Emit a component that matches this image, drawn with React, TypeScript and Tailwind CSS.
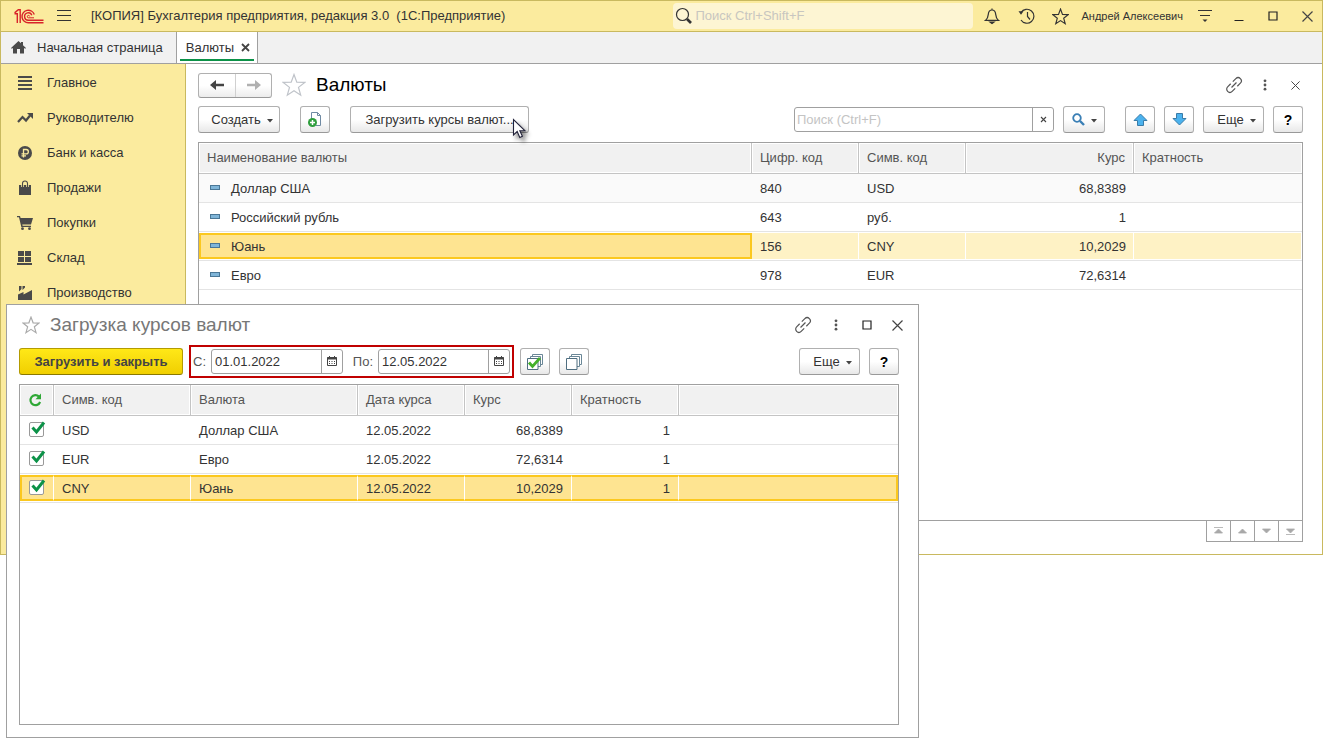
import type { ReactNode } from "react";
import clsx from "clsx";

const sections = [
  { label: "Главное", icon: <MainIcon /> },
  { label: "Руководителю", icon: <TrendIcon /> },
  { label: "Банк и касса", icon: <RubleIcon /> },
  { label: "Продажи", icon: <BagIcon /> },
  { label: "Покупки", icon: <CartIcon /> },
  { label: "Склад", icon: <WarehouseIcon /> },
  { label: "Производство", icon: <FactoryIcon /> },
];

const currencies = [
  { name: "Доллар США", num: "840", code: "USD", rate: "68,8389" },
  { name: "Российский рубль", num: "643", code: "руб.", rate: "1" },
  { name: "Юань", num: "156", code: "CNY", rate: "10,2029" },
  { name: "Евро", num: "978", code: "EUR", rate: "72,6314" },
];

const rates = [
  { code: "USD", name: "Доллар США", date: "12.05.2022", rate: "68,8389", ratio: "1" },
  { code: "EUR", name: "Евро", date: "12.05.2022", rate: "72,6314", ratio: "1" },
  { code: "CNY", name: "Юань", date: "12.05.2022", rate: "10,2029", ratio: "1" },
];

export default function App() {
  return (
    <div className="relative min-h-[740px] bg-white font-['Liberation_Sans',Arial,sans-serif] text-[13px] leading-4 text-[#333]">
      <div className="flex min-h-[555px] flex-col border border-[#c9b95f] bg-white">
        <TitleBar />
        <Tabs />
        <div className="flex flex-1">
          <Sidebar />
          <CurrencyList />
        </div>
      </div>
      <RatesDialog />
    </div>
  );
}

function TitleBar() {
  return (
    <header className="flex h-[31px] items-center border-b border-[#c9b95f] bg-[#fbeb9e] pl-[13px] pr-[9px]">
      <Logo />
      <IconButton label="Меню" className="ml-3">
        <svg width="16" height="14" viewBox="0 0 16 14" stroke="#333" strokeWidth="1">
          <path d="M1 1.500h14M1 6.500h14M1 11.500h14" />
        </svg>
      </IconButton>
      <span className="ml-[19px] whitespace-pre">[КОПИЯ] Бухгалтерия предприятия, редакция 3.0  (1С:Предприятие)</span>
      <label className="ml-auto flex h-[26px] w-[300px] items-center rounded-sm bg-[#fdf5d3] pl-[2px]">
        <svg width="18" height="18" viewBox="0 0 18 18" fill="none" stroke="#333">
          <circle cx="7.500" cy="7.500" r="6" strokeWidth="1.200" />
          <path d="m12 12 4 4" strokeWidth="2.600" />
        </svg>
        <input
          aria-label="Поиск"
          placeholder="Поиск Ctrl+Shift+F"
          className="ml-[2px] min-w-0 flex-1 bg-transparent outline-none placeholder:text-[#c8c6c0]"
        />
      </label>
      <div className="ml-[11px] flex items-center">
        <IconButton label="Уведомления">
          <svg width="16" height="18" viewBox="0 0 16 18" fill="none" stroke="#333" strokeWidth="1.200">
            <path d="M1.500 13.400h13c-2-1.600-2.600-3.400-2.800-6C11.500 4.600 10.300 3 8 3S4.500 4.600 4.300 7.400c-.2 2.600-.8 4.400-2.800 6zM8 1.400V3" />
            <path d="M6 15h4l-2 1.500z" fill="#333" />
          </svg>
        </IconButton>
        <IconButton label="История" className="ml-[18px]">
          <svg width="18" height="18" viewBox="0 0 18 18" fill="none" stroke="#333" strokeWidth="1.200">
            <path d="M3 5.500A7 7 0 1 1 3 13M9.500 5v4.500l2.500 3" />
            <path d="M.5 4.300h5L3 7.800z" fill="#333" stroke="none" />
          </svg>
        </IconButton>
        <IconButton label="Избранное" className="ml-4">
          <StarIcon size={17} color="#333" />
        </IconButton>
        <a href="#user" className="ml-3 text-[11px]">Андрей Алексеевич</a>
        <IconButton label="Настройки" className="ml-[14px]">
          <svg width="16" height="14" viewBox="0 0 16 14" stroke="#333">
            <path d="M1 1.500h14M3 6.500h10" />
            <path d="M5.500 10.500h5L8 13z" fill="#333" stroke="none" />
          </svg>
        </IconButton>
        <IconButton label="Свернуть" className="ml-[21px]">
          <svg width="10" height="12" viewBox="0 0 10 12" stroke="#222">
            <path d="M.5 10.500h9" />
          </svg>
        </IconButton>
        <IconButton label="Развернуть" className="ml-6">
          <SquareIcon />
        </IconButton>
        <IconButton label="Закрыть" className="ml-6">
          <CrossIcon size={11} />
        </IconButton>
      </div>
    </header>
  );
}

function Tabs() {
  return (
    <nav className="flex h-8 border-b border-[#a0a0a0] bg-[#f1f1f1]">
      <a href="#home" className="flex items-center border-r border-[#a0a0a0] pl-[10px] pr-[13px]">
        <svg width="15" height="13" viewBox="0 0 15 13" fill="#4a4a4a">
          <path d="M7.500 0 0 7l.8.8L2 7v5.500h4V8h3v4.500h4V7l1.200.8.800-.8-3-2.800V1h-2v1.300z" />
        </svg>
        <span className="ml-[11px]">Начальная страница</span>
      </a>
      <div className="flex w-[81px] flex-col border-r border-[#a0a0a0] bg-white px-[3px] pb-[2px]">
        <div className="flex flex-1 items-center justify-between border-b-2 border-[#0c9248] pl-[6px] pr-1 pt-1">
          <a href="#currencies">Валюты</a>
          <IconButton label="Закрыть вкладку">
            <svg width="9" height="9" viewBox="0 0 9 9" stroke="#444" strokeWidth="1.800">
              <path d="m1 1 7 7M8 1 1 8" />
            </svg>
          </IconButton>
        </div>
      </div>
    </nav>
  );
}

function Sidebar() {
  return (
    <aside className="w-[185px] shrink-0 border-r border-[#c9b95f] bg-[#fbeb9e] pt-px">
      {sections.map((s) => (
        <a key={s.label} href="#section" className="flex h-[35px] items-center pl-4">
          {s.icon}
          <span className="ml-[14px]">{s.label}</span>
        </a>
      ))}
    </aside>
  );
}

function CurrencyList() {
  return (
    <main className="flex min-w-0 flex-1 flex-col pb-3 pl-3 pr-[19px] pt-2">
      <div className="flex h-[26px] items-center">
        <div className="flex h-[25px] rounded-[3px] border border-[#b0b0b0] border-b-[#999] bg-gradient-to-b from-white from-50% to-[#ececec]">
          <button aria-label="Назад" className="flex w-[37px] items-center justify-center border-r border-[#d0d0d0]">
            <ArrowIcon color="#444" />
          </button>
          <button aria-label="Вперед" className="flex w-[35px] items-center justify-center">
            <ArrowIcon color="#b0b0b0" flip />
          </button>
        </div>
        <IconButton label="В избранное" className="ml-[10px]">
          <StarIcon size={24} color="#bfc3c9" />
        </IconButton>
        <h1 className="ml-[10px] text-[19px] leading-6 text-black">Валюты</h1>
        <div className="ml-auto flex items-center pr-[3px]">
          <IconButton label="Ссылка"><LinkIcon /></IconButton>
          <IconButton label="Действия" className="ml-5"><DotsIcon /></IconButton>
          <IconButton label="Закрыть" className="ml-6"><CrossIcon size={9} /></IconButton>
        </div>
      </div>

      <div className="mt-2 flex items-center">
        <Button className="w-[82px] pl-[6px]">Создать <Caret /></Button>
        <Button label="Создать из файла" className="ml-5 w-[30px]">
          <svg width="16" height="17" viewBox="0 0 16 17" fill="none">
            <path d="M4.500 8V1.500h6l3 3v10H9" fill="#fff" stroke="#6f8aa3" />
            <path d="M10.500 1.500v3h3" stroke="#6f8aa3" />
            <circle cx="5.500" cy="11.500" r="4.500" fill="#2f9e3d" />
            <path d="M5.500 9v5M3 11.500h5" stroke="#fff" strokeWidth="1.500" />
          </svg>
        </Button>
        <div className="relative ml-5">
          <Button className="w-[179px]">Загрузить курсы валют...</Button>
          <svg className="absolute left-[162px] top-[12px] drop-shadow-[3px_4px_2px_rgba(0,0,0,0.45)]" width="14" height="21" viewBox="0 0 14 21">
            <path d="M1.500 1.500v15.500l3.700-3.500 2.600 6 2.600-1.200-2.600-5.600h5z" fill="#fff" stroke="#22223a" strokeWidth="1.100" />
          </svg>
        </div>
        <div className="ml-auto flex h-[25px] w-[260px] rounded-[3px] border border-[#a0a0a0] bg-white">
          <input aria-label="Поиск в списке" placeholder="Поиск (Ctrl+F)" className="min-w-0 flex-1 pl-[2px] outline-none placeholder:text-[#c4c4c4]" />
          <button aria-label="Очистить" className="flex w-[21px] items-center justify-center border-l border-[#a0a0a0]">
            <svg width="7" height="7" viewBox="0 0 7 7" stroke="#444" strokeWidth="1.100"><path d="m1 1 5 5M6 1 1 6" /></svg>
          </button>
        </div>
        <Button label="Найти" className="ml-[9px] w-[42px]">
          <svg width="13" height="13" viewBox="0 0 13 13" fill="none" stroke="#3a7fb5">
            <circle cx="5" cy="5" r="3.800" strokeWidth="1.800" />
            <path d="m8 8 4 4" strokeWidth="2.400" />
          </svg>
          <Caret />
        </Button>
        <Button label="Вверх" className="ml-5 w-[30px]"><BlueArrow /></Button>
        <Button label="Вниз" className="ml-[9px] w-[30px]"><BlueArrow down /></Button>
        <Button className="ml-[9px] w-[61px] pl-[6px]">Еще <Caret /></Button>
        <Button className="ml-[9px] w-[30px] text-black"><span className="text-sm font-bold">?</span></Button>
      </div>

      <div className="mt-[9px] min-h-0 flex-1 border border-[#a0a0a0]">
        <table className="w-full table-fixed border-separate border-spacing-0">
          <colgroup>
            <col />
            <col className="w-[107px]" />
            <col className="w-[107px]" />
            <col className="w-[168px]" />
            <col className="w-[168px]" />
          </colgroup>
          <thead>
            <tr>
              <HeadCell>Наименование валюты</HeadCell>
              <HeadCell>Цифр. код</HeadCell>
              <HeadCell>Симв. код</HeadCell>
              <HeadCell right>Курс</HeadCell>
              <HeadCell last>Кратность</HeadCell>
            </tr>
          </thead>
          <tbody>
            {currencies.map((c, i) => {
              const active = c.code === "CNY";
              const cell = clsx(
                "mr-px flex h-[26px] items-center pl-2 pr-[7px] pt-[2px]",
                active && "bg-[#fef2c5]",
              );
              return (
                <tr key={c.code} className={clsx(i === 0 && "bg-[#fafafa]")}>
                  <td className="border-b border-[#e4e4e4] px-0 py-px">
                    <div
                      className={clsx(
                        "flex h-[26px] items-center border-2 pt-[2px]",
                        active ? "border-[#fbc81f] bg-[#fee491]" : "border-transparent",
                      )}
                    >
                      <span className="mb-[3px] ml-[9px] h-[5px] w-[10px] border border-[#4a7796] bg-[#7fb5d8]" />
                      <span className="ml-[11px]">{c.name}</span>
                    </div>
                  </td>
                  <td className="border-b border-[#e4e4e4] px-0 py-px"><div className={cell}>{c.num}</div></td>
                  <td className="border-b border-[#e4e4e4] px-0 py-px"><div className={cell}>{c.code}</div></td>
                  <td className="border-b border-[#e4e4e4] px-0 py-px"><div className={clsx(cell, "justify-end")}>{c.rate}</div></td>
                  <td className="border-b border-[#e4e4e4] px-0 py-px"><div className={cell} /></td>
                </tr>
              );
            })}
          </tbody>
        </table>
      </div>
      <div className="-mt-px flex h-[22px] self-end border border-[#a0a0a0] bg-white">
        <PagerButton label="В начало" d="M2 1.500h9M6.500 3 10.500 7H2.500z" />
        <PagerButton label="Предыдущая" d="M6.500 3 10.500 7h-8z" />
        <PagerButton label="Следующая" d="M2.500 3h8L6.500 7z" />
        <PagerButton label="В конец" d="M2 8.500h9M2.500 3h8L6.500 7z" last />
      </div>
    </main>
  );
}

function RatesDialog() {
  return (
    <section
      role="dialog"
      aria-label="Загрузка курсов валют"
      className="absolute left-[6px] right-[404px] top-[304px] flex min-h-[434px] flex-col border border-[#a0a0a0] bg-white px-3 pb-3"
    >
      <div className="flex h-10 items-center pr-[3px]">
        <IconButton label="В избранное" className="ml-[3px]">
          <StarIcon size={18} color="#aaa" />
        </IconButton>
        <h2 className="ml-[10px] text-[19px] leading-6 text-[#777]">Загрузка курсов валют</h2>
        <div className="ml-auto flex items-center">
          <IconButton label="Ссылка"><LinkIcon /></IconButton>
          <IconButton label="Действия" className="ml-[22px]"><DotsIcon /></IconButton>
          <IconButton label="Развернуть" className="ml-6"><SquareIcon /></IconButton>
          <IconButton label="Закрыть" className="ml-5"><CrossIcon size={11} /></IconButton>
        </div>
      </div>

      <div className="flex items-center pr-[7px]">
        <button className="h-[27px] w-[164px] rounded-[3px] border border-[#b39b00] border-b-[#8a7800] bg-gradient-to-b from-[#ffe817] to-[#f0cf00] font-bold text-[#444]">
          Загрузить и закрыть
        </button>
        <div className="ml-[6px] flex h-[33px] w-[325px] items-center justify-between border-2 border-[#c00000] px-[2px] text-[#555]">
          <DateField id="from" label="С:" value="01.01.2022" />
          <DateField id="to" label="По:" value="12.05.2022" />
        </div>
        <Button label="Установить флажки" className="ml-[6px] w-[30px]"><StackIcon checked /></Button>
        <Button label="Снять флажки" className="ml-[9px] w-[30px]"><StackIcon /></Button>
        <Button className="ml-auto w-[61px] pl-[6px]">Еще <Caret /></Button>
        <Button className="ml-[9px] w-[30px] text-black"><span className="text-sm font-bold">?</span></Button>
      </div>

      <div className="mr-[7px] mt-[6px] flex-1 border border-[#a0a0a0]">
        <table className="w-full table-fixed border-separate border-spacing-0">
          <colgroup>
            <col className="w-[34px]" />
            <col className="w-[137px]" />
            <col className="w-[167px]" />
            <col className="w-[107px]" />
            <col className="w-[107px]" />
            <col className="w-[107px]" />
            <col />
          </colgroup>
          <thead>
            <tr>
              <HeadCell>
                <svg width="15" height="14" viewBox="0 0 15 14" fill="none">
                  <path d="M11 3.600A5 5 0 1 0 12.100 9" stroke="#2fa836" strokeWidth="2.200" />
                  <path d="M13 .5v5.700H7.500z" fill="#2fa836" />
                </svg>
              </HeadCell>
              <HeadCell>Симв. код</HeadCell>
              <HeadCell>Валюта</HeadCell>
              <HeadCell>Дата курса</HeadCell>
              <HeadCell>Курс</HeadCell>
              <HeadCell>Кратность</HeadCell>
              <HeadCell last />
            </tr>
          </thead>
          <tbody>
            {rates.map((r) => {
              const active = r.code === "CNY";
              return (
                <tr key={r.code}>
                  <RateCell active={active} first><Check label={r.code} /></RateCell>
                  <RateCell active={active}>{r.code}</RateCell>
                  <RateCell active={active}>{r.name}</RateCell>
                  <RateCell active={active}>{r.date}</RateCell>
                  <RateCell active={active} right>{r.rate}</RateCell>
                  <RateCell active={active} right>{r.ratio}</RateCell>
                  <RateCell active={active} last />
                </tr>
              );
            })}
          </tbody>
        </table>
      </div>
    </section>
  );
}

function HeadCell({ children, right, last }: { children?: ReactNode; right?: boolean; last?: boolean }) {
  return (
    <th className={clsx("border-b border-[#c4c4c4] p-px font-normal text-[#555]", !last && "border-r")}>
      <div className={clsx("flex h-7 items-center bg-[#f1f1f1] px-[7px]", right && "justify-end")}>{children}</div>
    </th>
  );
}

type RateCellProps = { children?: ReactNode; active: boolean; first?: boolean; last?: boolean; right?: boolean };

function RateCell({ children, active, first, last, right }: RateCellProps) {
  return (
    <td className="border-b border-[#e4e4e4] px-0 py-px">
      <div
        className={clsx(
          "flex h-[26px] items-center border-y-2",
          active ? "border-y-[#fbc81f] bg-[#fee491]" : "border-y-transparent",
          first ? "border-l-2 pb-[2px] pl-[7px]" : "pl-2 pt-[2px]",
          first && (active ? "border-l-[#fbc81f]" : "border-l-transparent"),
          last ? "border-r-2" : "border-r",
          active ? (last ? "border-r-[#fbc81f]" : "border-r-white") : "border-r-transparent",
          right && "justify-end pr-2",
        )}
      >
        {children}
      </div>
    </td>
  );
}

function Check({ label }: { label: string }) {
  return (
    <label className="grid items-center">
      <input
        type="checkbox"
        defaultChecked
        aria-label={label}
        className="peer col-start-1 row-start-1 size-[15px] appearance-none rounded-[2px] border border-[#999] bg-white"
      />
      <svg className="pointer-events-none invisible col-start-1 row-start-1 mb-[3px] peer-checked:visible" width="17" height="14" viewBox="0 0 17 14" fill="none">
        <path d="m3.500 6.500 4 4.500L15 1.500" stroke="#0c9248" strokeWidth="3" />
      </svg>
    </label>
  );
}

function DateField({ id, label, value }: { id: string; label: string; value: string }) {
  return (
    <div className="flex items-center gap-[5px]">
      <label htmlFor={id}>{label}</label>
      <div className="flex h-[25px] w-[132px] rounded-[3px] border border-[#a0a0a0] bg-white">
        <input id={id} defaultValue={value} className="min-w-0 flex-1 pl-[3px] text-[#333] outline-none" />
        <button aria-label="Выбрать дату" className="flex w-[21px] items-center justify-center border-l border-[#a0a0a0] pb-[2px]">
          <svg width="10" height="10" viewBox="0 0 10 10" fill="none" stroke="#444">
            <path d="M.5 1.500h9v8h-9z" />
            <path d="M0 2.500h10" strokeWidth="2" />
            <path d="M2.500 0v2M7.500 0v2M2 5.500h1M4.500 5.500h1M7 5.500h1M2 7.500h1M4.500 7.500h1M7 7.500h1" />
          </svg>
        </button>
      </div>
    </div>
  );
}

function Button({ children, label, className }: { children: ReactNode; label?: string; className?: string }) {
  return (
    <button
      aria-label={label}
      className={clsx(
        "flex h-[27px] items-center justify-center gap-[6px] whitespace-nowrap rounded-[3px] border border-[#b0b0b0] border-b-[#999] bg-gradient-to-b from-white from-50% to-[#e8e8e8]",
        className,
      )}
    >
      {children}
    </button>
  );
}

function IconButton({ children, label, className }: { children: ReactNode; label: string; className?: string }) {
  return (
    <button aria-label={label} className={clsx("flex shrink-0 items-center justify-center", className)}>
      {children}
    </button>
  );
}

function PagerButton({ label, d, last }: { label: string; d: string; last?: boolean }) {
  return (
    <button
      aria-label={label}
      className={clsx("flex items-center justify-center border-[#a0a0a0]", last ? "w-[23px]" : "w-6 border-r")}
    >
      <svg width="13" height="10" viewBox="0 0 13 10" fill="#a8a8a8">
        <path d={d} stroke="#a8a8a8" strokeWidth="0.800" />
      </svg>
    </button>
  );
}

function Caret() {
  return (
    <svg width="6" height="6" viewBox="0 0 6 6" fill="#444">
      <path d="M0 2h6L3 5.500z" />
    </svg>
  );
}

function ArrowIcon({ color, flip }: { color: string; flip?: boolean }) {
  return (
    <svg width="14" height="10" viewBox="0 0 14 10" fill={color}>
      <path d={flip ? "M14 5 8 0v3.700H0v2.600h8V10z" : "M0 5l6-5v3.700h8v2.600H6V10z"} />
    </svg>
  );
}

function BlueArrow({ down }: { down?: boolean }) {
  return (
    <svg width="15" height="13" viewBox="0 0 15 13" fill="#4bb2ee" stroke="#3a7ca8">
      <path d={down ? "M4.500.5h6v5h3.500l-6.500 6.500L1 5.500h3.500z" : "M7.500 1 14 7.500h-3.500v5h-6v-5H1z"} />
    </svg>
  );
}

function StarIcon({ size, color }: { size: number; color: string }) {
  return (
    <svg width={size} height={size} viewBox="0 0 24 24" fill="none" stroke={color} strokeWidth={size > 20 ? 1.2 : 1.6}>
      <path d="m12 1.500 2.800 7.600 8 .3-6.300 5 2.200 7.800L12 17.800l-6.700 4.400 2.200-7.800-6.300-5 8-.3z" />
    </svg>
  );
}

function SquareIcon() {
  return (
    <svg width="10" height="10" viewBox="0 0 10 10" fill="none" stroke="#222" strokeWidth="1.200">
      <path d="M1 1h8v8H1z" />
    </svg>
  );
}

function CrossIcon({ size }: { size: number }) {
  return (
    <svg width={size} height={size} viewBox="0 0 11 11" stroke="#444" strokeWidth="1.200">
      <path d="m.5.5 10 10M10.500.5l-10 10" />
    </svg>
  );
}

function LinkIcon() {
  return (
    <svg width="18" height="18" viewBox="0 0 18 18" fill="none" stroke="#555" strokeWidth="1.200">
      <g transform="rotate(-45 9 9)">
        <path d="M7.500 5.800H3.200a3.200 3.200 0 0 0 0 6.400h4.300M10.500 5.800h4.300a3.200 3.200 0 0 1 0 6.400h-4.300M5.500 9h7" />
      </g>
    </svg>
  );
}

function DotsIcon() {
  return (
    <svg width="4" height="12" viewBox="0 0 4 12" fill="#555">
      <circle cx="2" cy="1.800" r="1.400" />
      <circle cx="2" cy="6" r="1.400" />
      <circle cx="2" cy="10.200" r="1.400" />
    </svg>
  );
}

function StackIcon({ checked }: { checked?: boolean }) {
  return (
    <svg width="16" height="16" viewBox="0 0 16 16" fill="#fff" stroke="#6a8797">
      <path d="M5.500.5h10v10h-10z" />
      <path d="M3.500 2.500h10v10h-10z" />
      <path d="M.5 4.500h10.500v11H.5z" stroke="#4f6e80" />
      {checked && <path d="m2 8.500 3.500 4L13 4" fill="none" stroke="#43b02a" strokeWidth="2.800" />}
    </svg>
  );
}

function Logo() {
  return (
    <svg width="30" height="15" viewBox="0 0 30 15" fill="none" stroke="#d8232a" strokeWidth="1.400">
      <path d="M.5 4.700h2.800V14M.6 3.900 4.300.8h1.900V14" />
      <path d="M20.300 5.500A6.300 6.300 0 1 0 14.500 13.800H29.500" />
      <path d="M17.800 6.300A3.700 3.700 0 1 0 14.500 11.200H29.500" />
      <path d="M15.700 7.400a1.200 1.200 0 1 0-1.200 1.400H20" strokeWidth="1" />
    </svg>
  );
}

function MainIcon() {
  return (
    <svg width="16" height="16" viewBox="0 0 16 16" fill="#4a4a4a">
      <path d="M1 1h14v2H1zM1 5h14v2H1zM1 9h14v2H1zM1 13h14v2H1z" />
    </svg>
  );
}

function TrendIcon() {
  return (
    <svg width="16" height="16" viewBox="0 0 16 16" fill="none">
      <path d="m1 12 4.500-5 3.500 3.500 4-5" stroke="#4a4a4a" strokeWidth="2.200" />
      <path d="M10 3h6v6z" fill="#4a4a4a" />
    </svg>
  );
}

function RubleIcon() {
  return (
    <svg width="16" height="16" viewBox="0 0 16 16" fill="none">
      <circle cx="8" cy="8" r="7" fill="#4a4a4a" />
      <path d="M6.500 12.500V4.500h2.700a2.100 2.100 0 0 1 0 4.300H4.500M4.500 10.800h4.500" stroke="#fbeb9e" strokeWidth="1.300" />
    </svg>
  );
}

function BagIcon() {
  return (
    <svg width="16" height="16" viewBox="0 0 16 16" fill="none">
      <path d="M2 5h12v10H2z" fill="#4a4a4a" />
      <path d="M5.500 7V3.500a2.500 2.500 0 0 1 5 0V7" stroke="#fbeb9e" strokeWidth="2.600" />
      <path d="M5.500 7V3.500a2.500 2.500 0 0 1 5 0V7" stroke="#4a4a4a" strokeWidth="1.100" />
    </svg>
  );
}

function CartIcon() {
  return (
    <svg width="16" height="16" viewBox="0 0 16 16" fill="#4a4a4a">
      <path d="M0 1h3l.6 2H16l-2 6.500H5.300l.3 1.200H14V12H4.300L2 2.300H0z" />
      <circle cx="5.500" cy="13.700" r="1.400" />
      <circle cx="12.500" cy="13.700" r="1.400" />
    </svg>
  );
}

function WarehouseIcon() {
  return (
    <svg width="16" height="16" viewBox="0 0 16 16" fill="#4a4a4a">
      <path d="M1 1h6v5H1zM8 1h6v5H8zM1 7h6v5H1zM8 7h6v5H8zM0 13h15v2H0z" />
    </svg>
  );
}

function FactoryIcon() {
  return (
    <svg width="16" height="16" viewBox="0 0 16 16" fill="#4a4a4a">
      <path d="M1 15V9.500L6.500 7v2.500L15 5v10zM2 1h2.500v3L2 6.500zM5.500 1H8v1.500L5.500 5z" />
    </svg>
  );
}
